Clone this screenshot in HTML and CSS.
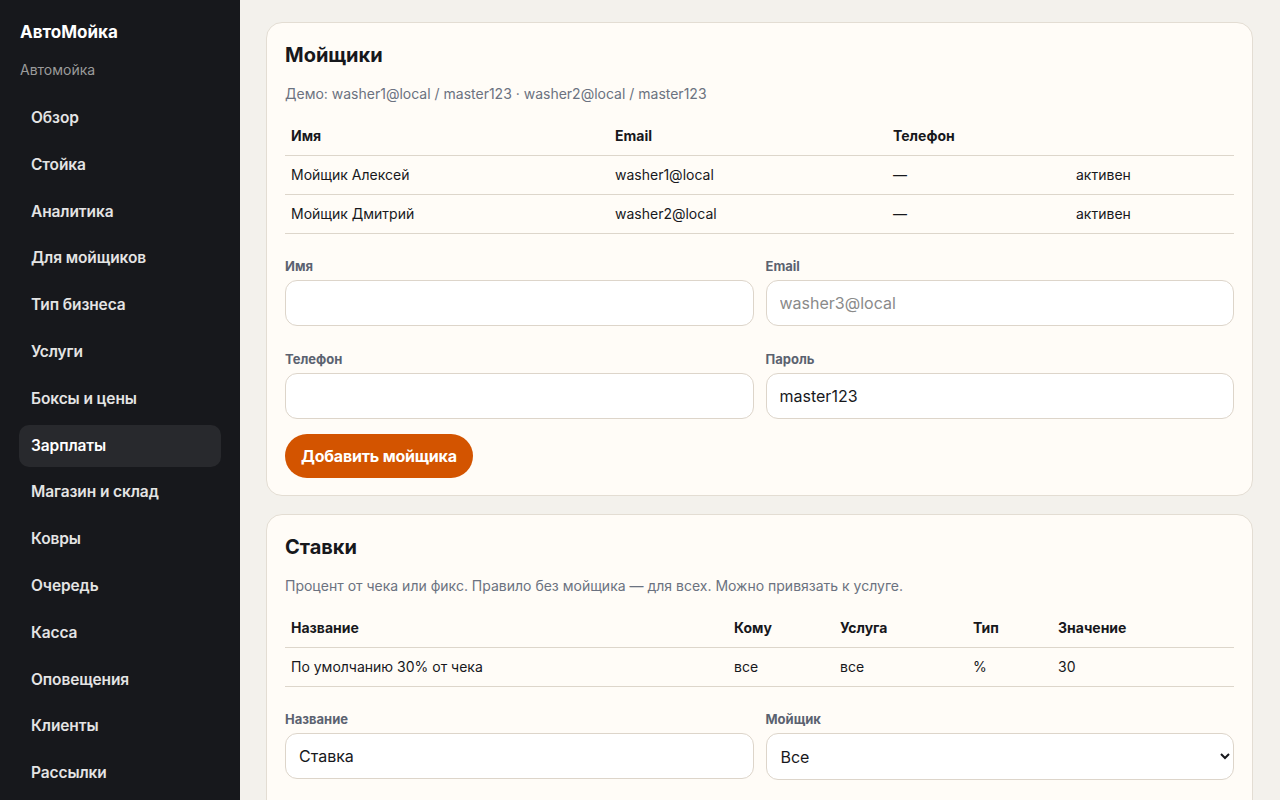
FILE: index.html
```html
<!DOCTYPE html>
<html lang="ru">
<head>
  <meta charset="UTF-8">
  <title>АвтоМойка — Зарплаты</title>
  <link rel="stylesheet" href="styles.css">
</head>
<body>

  <div class="layout">
    <aside class="sidebar">
      <div class="brand">АвтоМойка</div>
      <div class="brand-sub">Автомойка</div>
      <nav class="nav">
        <a class="nav-item" href="#">Обзор</a>
        <a class="nav-item" href="#">Стойка</a>
        <a class="nav-item" href="#">Аналитика</a>
        <a class="nav-item" href="#">Для мойщиков</a>
        <a class="nav-item" href="#">Тип бизнеса</a>
        <a class="nav-item" href="#">Услуги</a>
        <a class="nav-item" href="#">Боксы и цены</a>
        <a class="nav-item active" href="#">Зарплаты</a>
        <a class="nav-item" href="#">Магазин и склад</a>
        <a class="nav-item" href="#">Ковры</a>
        <a class="nav-item" href="#">Очередь</a>
        <a class="nav-item" href="#">Касса</a>
        <a class="nav-item" href="#">Оповещения</a>
        <a class="nav-item" href="#">Клиенты</a>
        <a class="nav-item" href="#">Рассылки</a>
        <a class="nav-item" href="#">Настройки</a>
      </nav>
    </aside>

    <main class="main">
      <section class="card">
        <h2>Мойщики</h2>
        <p class="hint">Демо: washer1@local / master123 · washer2@local / master123</p>
        <table class="table washers">
          <thead>
            <tr><th>Имя</th><th>Email</th><th>Телефон</th><th></th></tr>
          </thead>
          <tbody>
            <tr><td>Мойщик Алексей</td><td>washer1@local</td><td>—</td><td>активен</td></tr>
            <tr><td>Мойщик Дмитрий</td><td>washer2@local</td><td>—</td><td>активен</td></tr>
          </tbody>
        </table>
        <form class="form">
          <label class="field">
            <span>Имя</span>
            <input type="text">
          </label>
          <label class="field">
            <span>Email</span>
            <input type="text" placeholder="washer3@local">
          </label>
          <label class="field">
            <span>Телефон</span>
            <input type="text">
          </label>
          <label class="field">
            <span>Пароль</span>
            <input type="text" value="master123">
          </label>
          <div class="actions">
            <button type="button" class="btn">Добавить мойщика</button>
          </div>
        </form>
      </section>

      <section class="card">
        <h2>Ставки</h2>
        <p class="hint">Процент от чека или фикс. Правило без мойщика — для всех. Можно привязать к услуге.</p>
        <table class="table rates">
          <thead>
            <tr><th>Название</th><th>Кому</th><th>Услуга</th><th>Тип</th><th>Значение</th></tr>
          </thead>
          <tbody>
            <tr><td>По умолчанию 30% от чека</td><td>все</td><td>все</td><td>%</td><td>30</td></tr>
          </tbody>
        </table>
        <form class="form">
          <label class="field">
            <span>Название</span>
            <input type="text" value="Ставка">
          </label>
          <label class="field">
            <span>Мойщик</span>
            <select><option>Все</option></select>
          </label>
          <label class="field">
            <span>Услуга</span>
            <select><option>Все</option></select>
          </label>
          <label class="field">
            <span>Тип</span>
            <select><option>% от чека</option></select>
          </label>
          <label class="field">
            <span>Значение</span>
            <input type="text" value="30">
          </label>
          <div class="actions">
            <button type="button" class="btn">Добавить ставку</button>
          </div>
        </form>
      </section>
    </main>
  </div>

</body>
</html>
```

FILE: styles.css
```css
* {
  box-sizing: border-box;
}

body {
  margin: 0;
  background-color: #f3f1ec;
  font-family: Inter, "Noto Sans", sans-serif;
  color: #17181c;
  height: 100vh;
  overflow: hidden;
}

.layout {
  display: flex;
  height: 100vh;
}

/* sidebar */

.sidebar {
  width: 240px;
  flex-shrink: 0;
  background-color: #17181c;
  padding: 20px 19px;
  overflow: hidden;
}

.brand {
  color: #fff;
  font-size: 17px;
  font-weight: 700;
  line-height: 24px;
  padding-left: 1px;
}

.brand-sub {
  color: #9b9b9b;
  font-size: 14px;
  line-height: 20px;
  margin-top: 16px;
  padding-left: 1px;
}

.nav {
  display: flex;
  flex-direction: column;
  gap: 4.8px;
  margin-top: 17px;
}

.nav-item {
  display: block;
  height: 42px;
  line-height: 42px;
  padding: 0 12px;
  border-radius: 10px;
  color: #e4e4e4;
  font-size: 15.5px;
  font-weight: 600;
  letter-spacing: -0.1px;
  text-decoration: none;
}

.nav-item.active {
  background-color: #28292d;
  color: #fff;
}

/* main */

.main {
  flex: 1;
  padding: 22px 27px 22px 26px;
  display: flex;
  flex-direction: column;
  gap: 18px;
  overflow: hidden;
}

.card {
  background-color: #fffcf7;
  border: 1px solid #e3ddd3;
  border-radius: 16px;
  padding: 17px 18px 17px 18px;
}

.card h2 {
  margin: 0;
  font-size: 20px;
  font-weight: 700;
  line-height: 30px;
}

.hint {
  margin: 14px 0 13px;
  color: #6b7280;
  font-size: 14px;
  line-height: 20px;
}

.table {
  width: 100%;
  border-collapse: collapse;
  table-layout: fixed;
  font-size: 14px;
}

.table th,
.table td {
  text-align: left;
  padding: 9px 6px;
  line-height: 20px;
  border-bottom: 1px solid #ddd6cb;
}

.table th {
  font-weight: 700;
}

.washers th:nth-child(1) { width: 324px; }
.washers th:nth-child(2) { width: 278px; }
.washers th:nth-child(3) { width: 183px; }

.rates th:nth-child(1) { width: 443px; }
.rates th:nth-child(2) { width: 106px; }
.rates th:nth-child(3) { width: 133px; }
.rates th:nth-child(4) { width: 85px; }

.form {
  display: grid;
  grid-template-columns: 1fr 1fr;
  gap: 25px 12px;
  margin-top: 24px;
}

.field span {
  display: block;
  color: #5b6270;
  font-size: 13px;
  font-weight: 700;
  line-height: 16px;
  margin-bottom: 6px;
}

.field input,
.field select {
  display: block;
  width: 100%;
  height: 46px;
  background-color: #fff;
  border: 1px solid #ddd5ca;
  border-radius: 12px;
  padding: 0 13px;
  font-family: Inter, "Noto Sans", sans-serif;
  font-size: 16px;
  color: #17181c;
}

.field select {
  height: 47px;
  padding: 0 10px;
}

.field input::placeholder {
  color: #8a8a8a;
}

.actions {
  grid-column: 1 / -1;
  margin-top: -10px;
}

.btn {
  height: 44px;
  padding: 0 16px;
  border: none;
  border-radius: 22px;
  background-color: #d35400;
  color: #fff;
  font-family: Inter, "Noto Sans", sans-serif;
  font-size: 16px;
  font-weight: 700;
  letter-spacing: -0.2px;
  cursor: pointer;
}
```
